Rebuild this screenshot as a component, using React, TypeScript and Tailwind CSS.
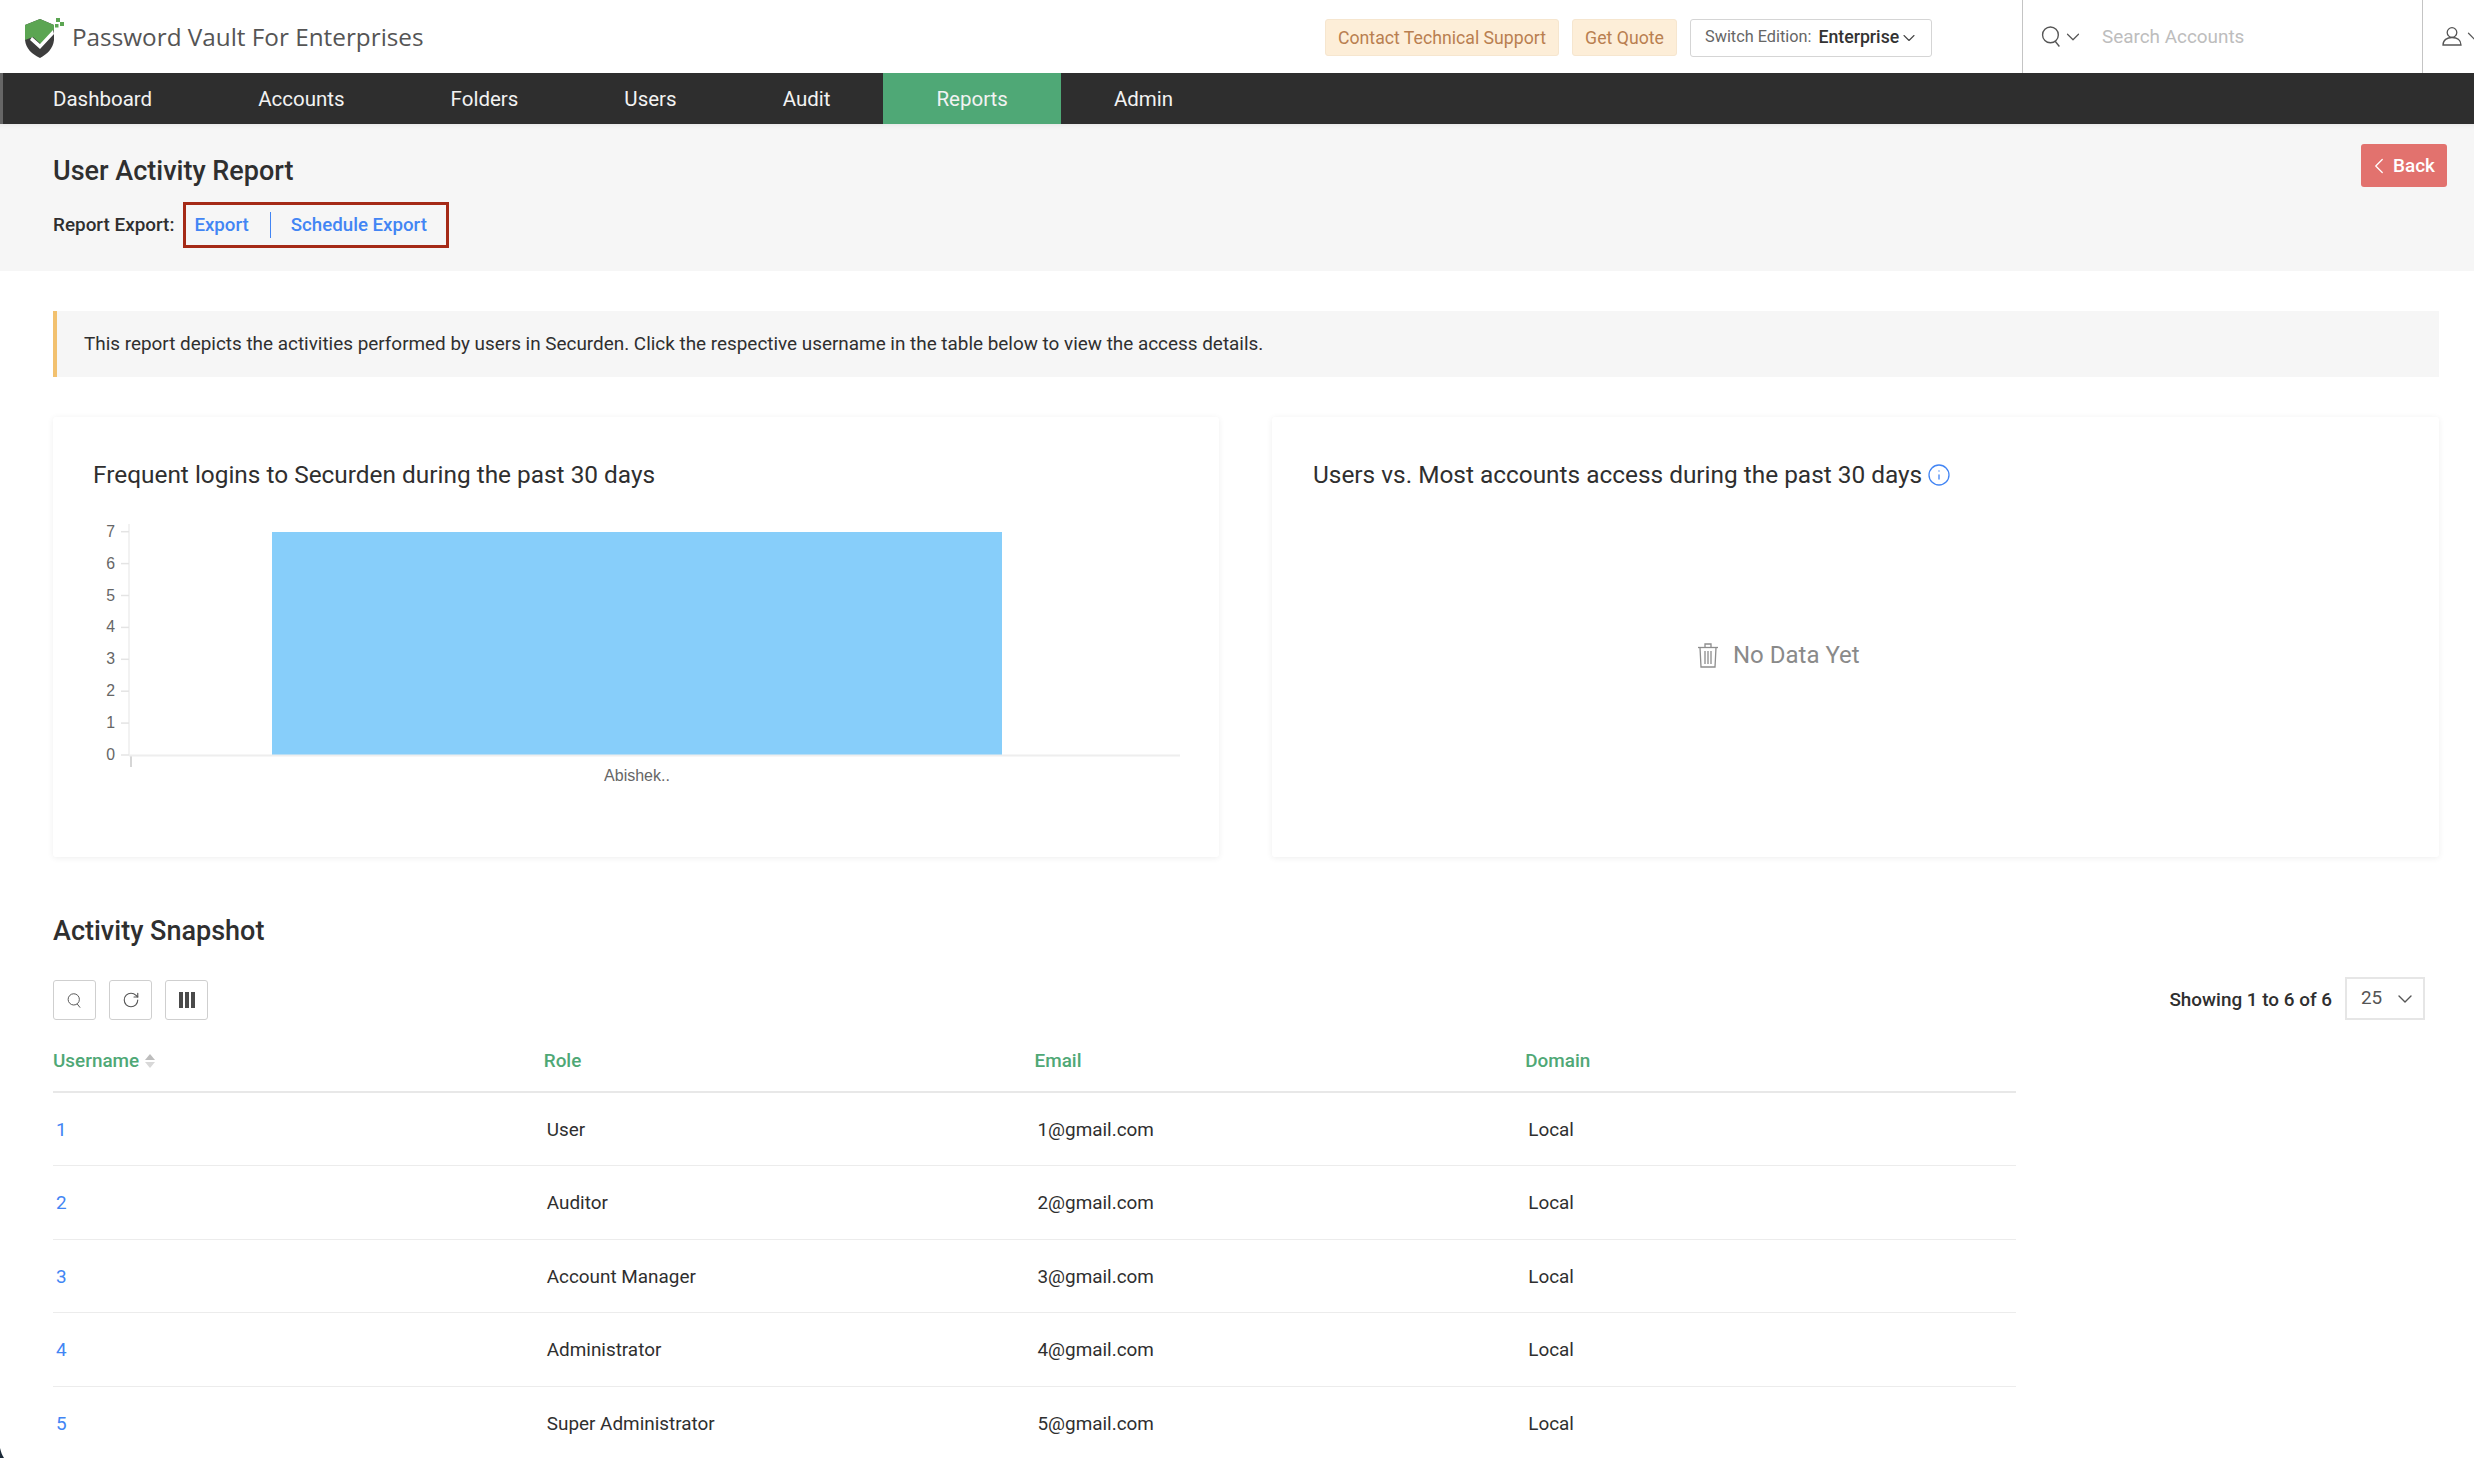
import { ChevronDown, ChevronLeft, Info, RotateCw } from "lucide-react";

const NAV = ["Dashboard", "Accounts", "Folders", "Users", "Audit", "Reports", "Admin"];

const ROWS = [
  { name: "1", role: "User", email: "1@gmail.com" },
  { name: "2", role: "Auditor", email: "2@gmail.com" },
  { name: "3", role: "Account Manager", email: "3@gmail.com" },
  { name: "4", role: "Administrator", email: "4@gmail.com" },
  { name: "5", role: "Super Administrator", email: "5@gmail.com" },
];

function Logo() {
  return (
    <svg width="40" height="40" viewBox="0 0 40 40" className="shrink-0">
      <path d="M1 7 L16 1 L30 7 L30 22 C29 31 23 36 16 40 C8 36 2 31 1 22 Z" fill="#3d3d3d" />
      <path d="M1 7 L16 1 L30 7 L30 12 L17 26 L9 19 L1 22 Z" fill="#5ba552" />
      <path d="M8 19 L16 26 L29 12 L30 16 L16 31 L6 22 Z" fill="#ffffff" />
      <rect x="32" y="0" width="4" height="4" fill="#5ba552" />
      <rect x="36" y="4" width="4" height="4" fill="#5ba552" />
      <rect x="31" y="6" width="3.5" height="3.5" fill="#5ba552" />
    </svg>
  );
}

function SearchIcon({ size }: { size: number }) {
  return (
    <svg width={size} height={size} viewBox="0 0 20 20" fill="none" stroke="#555555" strokeWidth="1.3">
      <circle cx="9" cy="8.5" r="7.5" />
      <path d="M13.5 14.5 L17.5 19.5" />
    </svg>
  );
}

function UserIcon() {
  return (
    <svg width="20" height="19" viewBox="0 0 20 19" fill="none" stroke="#555555" strokeWidth="1.3" className="shrink-0">
      <circle cx="10" cy="5.5" r="4.8" />
      <path d="M1 18 H19 C19 13 15 10.5 10 10.5 C5 10.5 1 13 1 18 Z" />
    </svg>
  );
}

function TrashIcon() {
  return (
    <svg width="22" height="25" viewBox="0 0 22 25" fill="none" stroke="#8d8d8d" strokeWidth="1.3">
      <path d="M1 4.5 H21" />
      <path d="M8 4.5 V1 H14 V4.5" />
      <path d="M3 4.5 L4 24 H18 L19 4.5" />
      <path d="M8 8 V21 M11 8 V21 M14 8 V21" />
    </svg>
  );
}

function BarChart() {
  const ticks = [7, 6, 5, 4, 3, 2, 1, 0];
  return (
    <svg width="1120" height="270" viewBox="0 0 1120 270" className="block">
      <line x1="36" y1="0" x2="36" y2="231" stroke="#eeeeee" strokeWidth="1.5" />
      <line x1="38" y1="231" x2="38" y2="243" stroke="#c8c8c8" strokeWidth="1.5" />
      {ticks.map((t) => {
        const y = 231 - t * 31.9;
        return (
          <g key={t}>
            <line x1="28" y1={y} x2="36" y2={y} stroke="#e4e4e4" strokeWidth="1.5" />
            <text x="22" y={y + 5} textAnchor="end" fontSize="15.8" fill="#666666" fontFamily="Liberation Sans">
              {t}
            </text>
          </g>
        );
      })}
      <rect x="179" y="8" width="730" height="223" fill="#87cefa" />
      <line x1="36" y1="231.5" x2="1087" y2="231.5" stroke="#eeeeee" strokeWidth="2" />
      <text x="544" y="257" textAnchor="middle" fontSize="16" fill="#666666" fontFamily="Liberation Sans">
        Abishek..
      </text>
    </svg>
  );
}

function ToolButton({ children }: { children: React.ReactNode }) {
  return (
    <button className="flex h-[40px] w-[43px] items-center justify-center rounded-[3px] border border-[#cfcfcf] bg-white text-[#555555]">
      {children}
    </button>
  );
}

export default function App() {
  return (
    <div className="relative h-[1458px] w-[2474px] overflow-hidden bg-white font-['Roboto',sans-serif] text-[18.9px] text-[#2f2f2f]">
      <header className="flex h-[73px] items-stretch">
        <div className="flex items-center pl-[24px] pt-[2px]">
          <Logo />
          <span className="ml-[8px] font-['Open_Sans',sans-serif] text-[24.3px] text-[#555555]">
            Password Vault For Enterprises
          </span>
        </div>
        <div className="ml-auto flex items-center gap-[13px] pr-[90px] pt-[2px]">
          <a className="flex h-[37px] w-[234px] items-center justify-center rounded-[3px] border border-[#f6e6cf] bg-[#fdeed8] pt-[1px] text-[17.7px] text-[#b97f50]">
            Contact Technical Support
          </a>
          <a className="flex h-[37px] w-[105px] items-center justify-center rounded-[3px] border border-[#f6e6cf] bg-[#fdeed8] pt-[1px] text-[17.7px] text-[#b97f50]">
            Get Quote
          </a>
          <div className="flex h-[38px] w-[242px] items-center rounded-[3px] border border-[#d5d5d5] pl-[14px] text-[16.3px]">
            <span className="text-[#666666]">Switch Edition:</span>
            <span className="ml-[7px] text-[17.7px] font-medium text-[#333333]">Enterprise</span>
            <ChevronDown className="h-[20px] w-[20px] text-[#444444]" strokeWidth={1.3} />
          </div>
        </div>
        <div className="flex w-[400px] items-center border-l border-[#c4c4c4] pl-[18px]">
          <SearchIcon size={21} />
          <ChevronDown className="h-[22px] w-[22px] text-[#555555]" strokeWidth={1.3} />
          <span className="ml-[18px] pt-[2px] text-[#bdbdbd]">Search Accounts</span>
        </div>
        <div className="flex w-[52px] items-center gap-[1px] border-l border-[#c4c4c4] pb-[1px] pl-[19px]">
          <UserIcon />
          <ChevronDown className="h-[22px] w-[22px] shrink-0 text-[#555555]" strokeWidth={1.3} />
        </div>
      </header>

      <nav className="flex h-[51px] border-l-[3px] border-[#666666] bg-[#2e2e2e] text-[20.5px] text-[#f2f2f2]">
        {NAV.map((n, i) => (
          <a
            key={n}
            className={`flex items-center px-[53px] pt-[1px] ${i === 0 ? "-ml-[3px]" : ""} ${
              n === "Reports" ? "bg-[#4fa876]" : ""
            }`}
          >
            {n}
          </a>
        ))}
      </nav>

      <section className="flex h-[147px] justify-between bg-[#f6f6f6] pl-[53px] pr-[27px] pt-[31px] shadow-[inset_0_6px_6px_-6px_rgba(0,0,0,0.1)]">
        <div>
          <h1 className="pt-[1px] text-[27px] font-medium leading-[30px]">User Activity Report</h1>
          <div className="mt-[16px] flex items-center">
            <span className="font-medium">Report Export:</span>
            <div className="ml-[9px] flex h-[46px] w-[266px] items-center border-[3px] border-[#a52a17] pl-[8px] text-[18.7px] font-medium text-[#4285f4]">
              <a>Export</a>
              <span className="ml-[21px] h-[26px] w-px bg-[#4285f4]" />
              <a className="ml-[20px]">Schedule Export</a>
            </div>
          </div>
        </div>
        <button className="mt-[-11px] flex h-[43px] w-[86px] items-center justify-center rounded-[3px] bg-[#e2726e] pt-[1px] font-medium text-white">
          <ChevronLeft className="-ml-[7px] mr-[1px] h-[26px] w-[26px]" strokeWidth={1.2} />
          Back
        </button>
      </section>

      <main className="pl-[53px] pr-[35px]">
        <div className="mt-[40px] flex h-[66px] items-center border-l-[4px] border-[#f2c16f] bg-[#f6f6f6] pl-[27px] pt-[1px]">
          This report depicts the activities performed by users in Securden. Click the respective username in the table below to view the access details.
        </div>

        <div className="mt-[40px] flex gap-[53px]">
          <div className="h-[440px] w-[1166px] rounded-[3px] bg-white pl-[40px] pt-[41px] shadow-[0_1px_6px_rgba(0,0,0,0.07)]">
            <h3 className="text-[24.4px] leading-[34px]">Frequent logins to Securden during the past 30 days</h3>
            <div className="mt-[32px]">
              <BarChart />
            </div>
          </div>
          <div className="h-[440px] flex-1 rounded-[3px] bg-white pl-[41px] pt-[41px] shadow-[0_1px_6px_rgba(0,0,0,0.07)]">
            <h3 className="flex items-center text-[24.4px] leading-[34px]">
              Users vs. Most accounts access during the past 30 days
              <Info className="ml-[5px] h-[24px] w-[24px] text-[#4285f4]" strokeWidth={1.3} />
            </h3>
            <div className="ml-[384px] mt-[145px] flex items-center gap-[14px] text-[24px] text-[#8a8a8a]">
              <TrashIcon />
              <span>No Data Yet</span>
            </div>
          </div>
        </div>

        <h2 className="mt-[58px] text-[27px] font-medium leading-[32px]">Activity Snapshot</h2>

        <div className="mt-[30px] flex items-start justify-between pr-[14px]">
          <div className="mt-[3px] flex gap-[13px]">
            <ToolButton>
              <SearchIcon size={15} />
            </ToolButton>
            <ToolButton>
              <RotateCw className="h-[18px] w-[18px]" strokeWidth={1.5} />
            </ToolButton>
            <ToolButton>
              <span className="flex gap-[2px]">
                <span className="h-[16px] w-[4px] bg-[#4a4a4a]" />
                <span className="h-[16px] w-[4px] bg-[#4a4a4a]" />
                <span className="h-[16px] w-[4px] bg-[#4a4a4a]" />
              </span>
            </ToolButton>
          </div>
          <div className="flex items-center">
            <span className="pt-[3px] font-medium">Showing 1 to 6 of 6</span>
            <div className="ml-[13px] flex h-[43px] w-[80px] items-center border-2 border-[#e6e6e6] pl-[14px] text-[#555555]">
              25
              <ChevronDown className="ml-[11px] h-[24px] w-[24px] text-[#555555]" strokeWidth={1.4} />
            </div>
          </div>
        </div>

        <div className="w-[1963px]">
          <div className="grid h-[73px] grid-cols-4 items-center border-b-2 border-[#e8e8e8] pt-[12px] font-medium text-[#4fa876]">
            <div className="flex items-center gap-[6px]">
              Username
              <span className="flex flex-col gap-[2px]">
                <span className="h-0 w-0 border-x-[5px] border-b-[6px] border-x-transparent border-b-[#bdbdbd]" />
                <span className="h-0 w-0 border-x-[5px] border-t-[6px] border-x-transparent border-t-[#d8d8d8]" />
              </span>
            </div>
            <div>Role</div>
            <div>Email</div>
            <div>Domain</div>
          </div>
          {ROWS.map((r) => (
            <div key={r.name} className="grid h-[73.4px] grid-cols-4 items-center border-b border-[#ececec] pt-[2px]">
              <a className="pl-[3px] text-[#4285f4]">{r.name}</a>
              <div className="pl-[3px]">{r.role}</div>
              <div className="pl-[3px]">{r.email}</div>
              <div className="pl-[3px]">Local</div>
            </div>
          ))}
        </div>
      </main>

      <svg width="4" height="10" viewBox="0 0 4 10" className="absolute bottom-0 left-0">
        <path d="M0 0 C1 4 2 7 4 10 H0 Z" fill="#1b2a38" />
      </svg>
    </div>
  );
}
